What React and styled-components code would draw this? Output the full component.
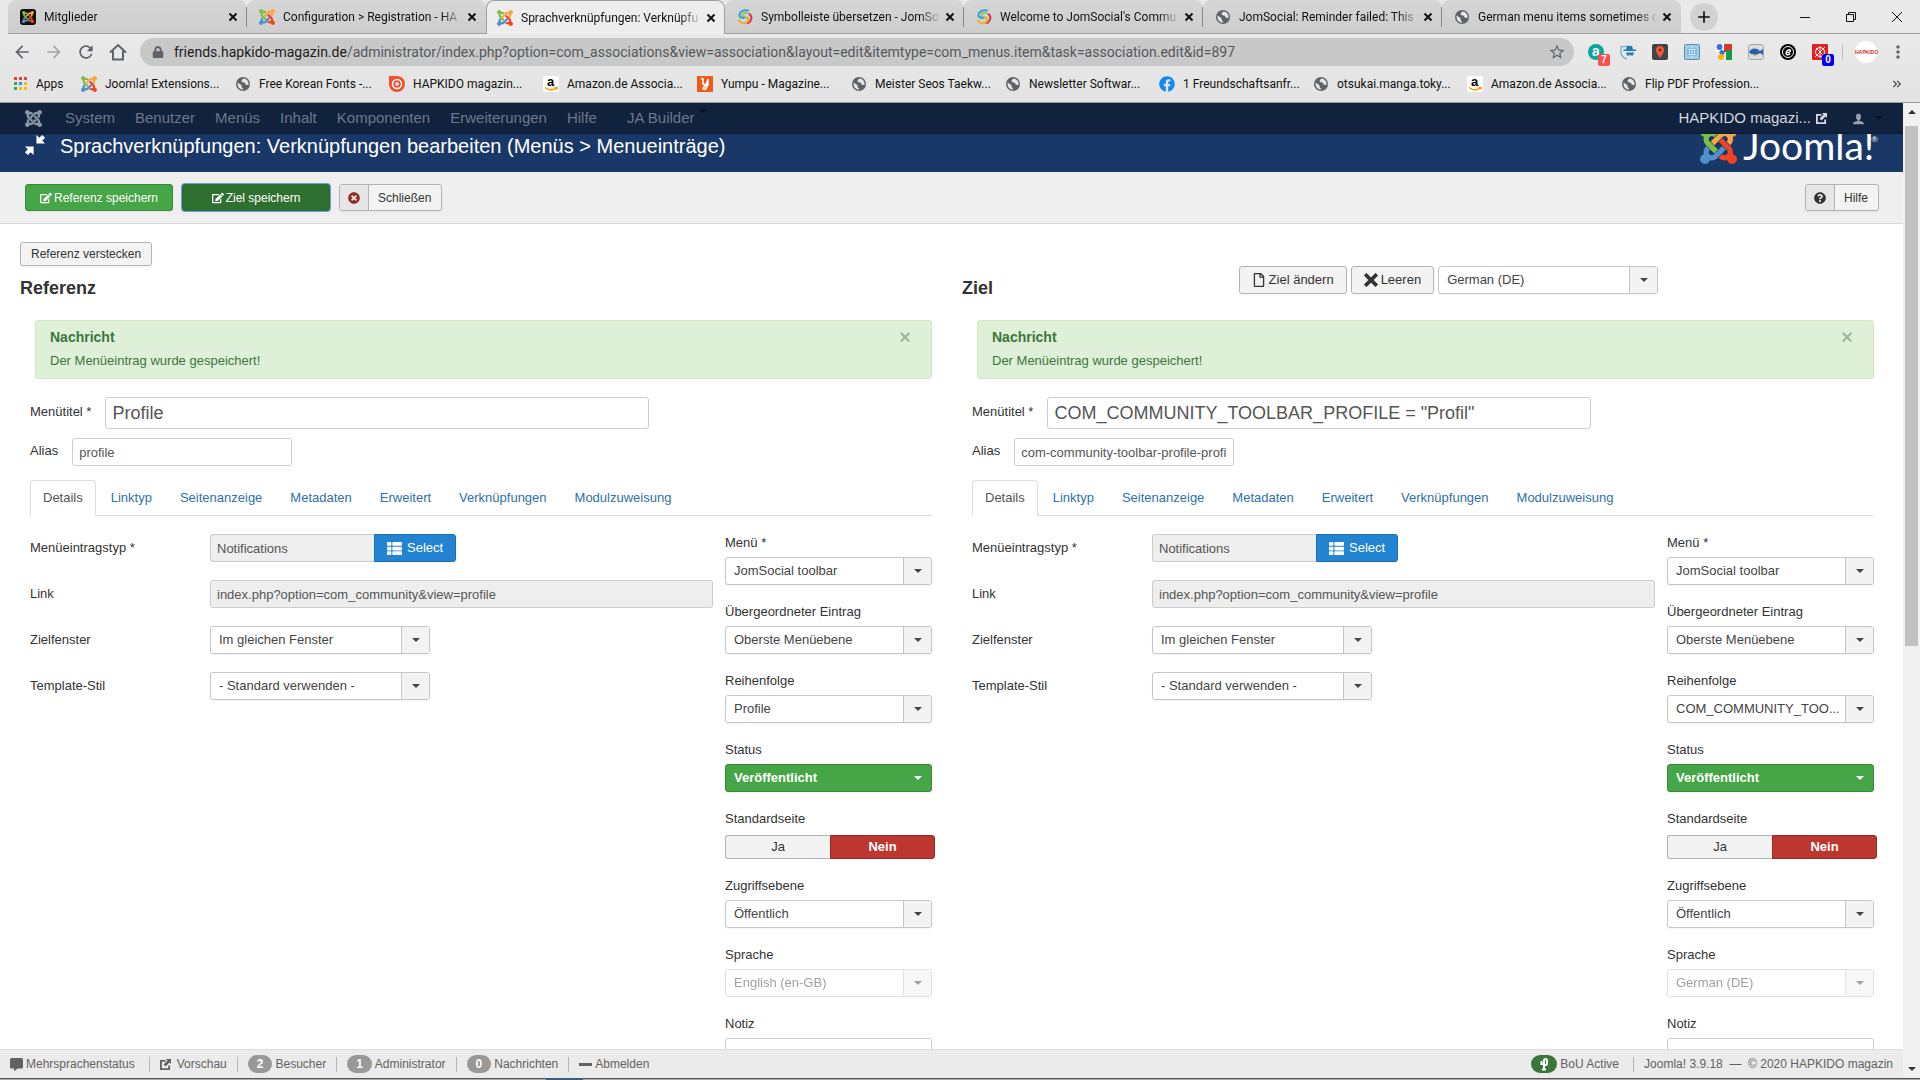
import React, { useId } from 'react';
import styled, { createGlobalStyle, css } from 'styled-components';
import {
  FaEdit,
  FaTimesCircle,
  FaQuestionCircle,
  FaRegFile,
  FaThList,
  FaCommentAlt,
  FaFacebook,
  FaLock,
} from 'react-icons/fa';
import { ImCross, ImUser } from 'react-icons/im';
import {
  MdArrowBack,
  MdArrowForward,
  MdRefresh,
  MdStarBorder,
  MdMoreVert,
  MdAdd,
  MdKeyboardDoubleArrowRight,
} from 'react-icons/md';

const GlobalStyle = createGlobalStyle`
  *, *::before, *::after {
    box-sizing: border-box;
  }

  body {
    margin: 0;
    background: #fff;
    color: #333;
    font: 13px/18px "Liberation Sans", Arial, sans-serif;
    overflow: hidden;
  }

  button, input, select {
    font: inherit;
    color: inherit;
    margin: 0;
  }

  a {
    color: inherit;
    text-decoration: none;
  }

  svg {
    flex: none;
    display: block;
  }
`;

/* ---------- browser frame ---------- */

const Window = styled.div`
  display: flex;
  flex-direction: column;
  height: 100vh;
`;

const Chrome = styled.header`
  flex: none;
  background: linear-gradient(#ededed, #e3e3e3);
  border-bottom: 1px solid #9a9a9a;
  color: #111;
  font: 12px/16px Roboto, "Open Sans", sans-serif;
`;

const TabStrip = styled.div`
  display: flex;
  height: 34px;
  padding-left: 8px;
  background: #e9e9e9;
`;

const BrowserTab = styled.div`
  display: flex;
  align-items: center;
  flex: 0 1 239px;
  min-width: 0;
  gap: 8px;
  padding: 0 9px 0 12px;
  border-radius: 8px 8px 0 0;
  background: linear-gradient(#d6d6d6, #cdcdcd);
  border-bottom: 1px solid #a0a0a0;

  button {
    margin-left: -4px;
  }

  ${(props) =>
    props.$active &&
    css`
      background: #ededed;
      border: 1px solid #a0a0a0;
      border-bottom: 0;
      padding: 0 8px 0 10px;
    `}
`;

const TabTitle = styled.span`
  flex: 1;
  overflow: hidden;
  white-space: nowrap;
  mask-image: linear-gradient(to right, #000 88%, transparent);
`;

const TabDivider = styled.span`
  flex: none;
  width: 1px;
  height: 20px;
  margin: 7px 0 7px -1px;
  background: #888;
`;

const StripRest = styled.div`
  flex: 1;
  display: flex;
  align-items: center;
  padding-left: 9px;
  border-bottom: 1px solid #a0a0a0;
`;

const PlainButton = styled.button`
  display: flex;
  align-items: center;
  justify-content: center;
  padding: 0;
  border: 0;
  background: none;
`;

const NewTab = styled(PlainButton)`
  width: 28px;
  height: 28px;
  border-radius: 50%;
  background: #d2d2d2;
`;

const WindowButtons = styled.div`
  display: flex;
  margin-left: auto;

  button {
    width: 46px;
    height: 28px;
  }
`;

const AddressRow = styled.div`
  display: flex;
  align-items: center;
  height: 36px;
  padding: 0 12px;
  color: #5f6368;
`;

const NavButtons = styled.div`
  display: flex;
  gap: 12px;
  margin-right: 12px;
`;

const AddressBar = styled.div`
  display: flex;
  align-items: center;
  flex: 1;
  height: 28px;
  padding: 0 8px 0 12px;
  gap: 10px;
  border-radius: 14px;
  background: #c8c8c8;
`;

const Address = styled.span`
  flex: 1;
  font-size: 14px;
  white-space: nowrap;
  color: #55585c;

  b {
    font-weight: 400;
    color: #1c1c1c;
  }
`;

const Extensions = styled.div`
  display: flex;
  align-items: center;
  gap: 16px;
  margin-left: 14px;
`;

const Extension = styled.span`
  position: relative;
  display: block;
`;

const ExtensionBadge = styled.span`
  position: absolute;
  right: -6px;
  bottom: -6px;
  width: 12px;
  border-radius: 2px;
  background: ${(props) => props.$color};
  color: #fff;
  font: bold 10px/12px "Liberation Sans", Arial, sans-serif;
  text-align: center;
`;

const ToolbarLine = styled.span`
  width: 1px;
  height: 16px;
  margin: 0 -4px 0 -2px;
  background: #bdbdbd;
`;

const Avatar = styled.span`
  width: 22px;
  height: 22px;
  margin-right: -5px;
  border-radius: 50%;
  background: #fff;
  color: #c33;
  font: bold 5px/22px "Liberation Sans", Arial, sans-serif;
  text-align: center;
`;

const BookmarkBar = styled.nav`
  display: flex;
  align-items: center;
  height: 32px;
  padding: 0 16px 4px 14px;
`;

const Bookmark = styled.a`
  display: flex;
  align-items: center;
  gap: 8px;
  flex: 0 1 ${(props) => props.$width || 154}px;
  white-space: nowrap;
`;

const MoreBookmarks = styled(PlainButton)`
  margin-left: auto;
  color: #444;
`;

const Viewport = styled.div`
  display: flex;
  flex: 1;
  min-height: 0;
`;

const Page = styled.div`
  display: flex;
  flex-direction: column;
  flex: 1;
  min-width: 0;
`;

const Scrollbar = styled.div`
  display: flex;
  flex-direction: column;
  align-items: center;
  justify-content: space-between;
  width: 17px;
  background: #f1f1f1;
  padding: 7px 0;
`;

const ScrollTrack = styled.div`
  flex: 1;
  width: 13px;
  margin: 12px 0;
`;

const ScrollThumb = styled.div`
  height: 56%;
  background: #c1c1c1;
`;

const Arrow = styled.span`
  flex: none;
  width: 0;
  height: 0;
  border: 4px solid transparent;
  border-${(props) => (props.$up ? 'bottom' : 'top')}-color: ${(props) => props.$color || '#333'};
  border-${(props) => (props.$up ? 'top' : 'bottom')}-width: 0;
`;

const TaskbarEdge = styled.div`
  flex: none;
  height: 2px;
  padding-left: 546px;
  border-top: 1px solid #555;
  background: #aaa;

  &::before {
    content: '';
    display: block;
    width: 37px;
    height: 1px;
    background: #1d63b0;
  }
`;

/* ---------- administrator header ---------- */

const Navbar = styled.nav`
  display: flex;
  align-items: center;
  flex: none;
  height: 31px;
  padding: 0 20px 0 25px;
  background: #10223e;
  border-bottom: 1px solid #0b182d;
  color: #6c788a;
  font-size: 15px;
`;

const NavMenu = styled.div`
  display: flex;
  gap: 20px;
  margin-left: 23px;

  a:last-of-type {
    margin-left: 10px;
  }

  span {
    margin-left: -16px;
  }
`;

const NavRight = styled.div`
  display: flex;
  align-items: center;
  margin-left: auto;
  gap: 10px;
  color: #97a0ad;
`;

const SiteLink = styled.a`
  display: flex;
  align-items: center;
  gap: 5px;
  margin-right: 15px;
  color: #d5d8dc;
`;

const TitleBar = styled.div`
  display: flex;
  align-items: flex-start;
  justify-content: space-between;
  flex: none;
  height: 38px;
  padding: 0 25px;
  overflow: hidden;
  background: #1a3867;
  color: #fff;
`;

const PageTitle = styled.h1`
  display: flex;
  gap: 14px;
  margin: 0;
  font-size: 20px;
  font-weight: 400;
  line-height: 24px;
`;

const Brand = styled.div`
  display: flex;
  gap: 6px;
  margin-top: -7px;
  font: 39px/36px Lato, sans-serif;

  sup {
    align-self: flex-start;
    margin: 2px 0 0 -9px;
    font-size: 8px;
    line-height: 20px;
  }
`;

const Subhead = styled.div`
  display: flex;
  flex: none;
  gap: 9px;
  padding: 12px 24px 12px 25px;
  background: #efefef;
  border-bottom: 1px solid #d9d9d9;
  font-size: 12px;

  > :last-child {
    margin-left: auto;
  }
`;

const Button = styled.button`
  display: inline-flex;
  align-items: center;
  justify-content: center;
  gap: 3px;
  height: ${(props) => props.$height || 28}px;
  padding: 0 12px;
  border: 1px solid #b3b3b3;
  border-radius: 3px;
  background: #f3f3f3;
  color: #333;
  box-shadow: 0 1px 2px rgba(0, 0, 0, 0.05);
  white-space: nowrap;
`;

const SaveButton = styled(Button)`
  width: 148px;
  gap: 2px;
  background: #46a546;
  border-color: #3a8a3a;
  color: #fff;

  ${(props) =>
    props.$focused &&
    css`
      background: #2f6f2f;
      border-color: #2f6f2f;
      box-shadow: 0 0 0 1px #6a9fe8;
    `}
`;

const IconButton = styled(Button)`
  padding: 0 10px 0 0;
  gap: 9px;
`;

const IconCell = styled.span`
  display: flex;
  align-items: center;
  justify-content: center;
  align-self: stretch;
  width: 29px;
  border-right: 1px solid #b3b3b3;
  border-radius: 2px 0 0 2px;
  background: #e6e6e6;
  color: ${(props) => props.$color || '#333'};
`;

/* ---------- association panes ---------- */

const Content = styled.main`
  flex: 1;
  min-height: 0;
  overflow: hidden;
  padding: 18px 19px 0 20px;
`;

const SmallButton = styled(Button)`
  display: flex;
  padding: 0 10px;
  font-size: 12px;
`;

const Panes = styled.div`
  display: grid;
  grid-template-columns: 1fr 1fr;
  gap: 20px;
`;

const PaneHead = styled.div`
  display: grid;
  grid-template-columns: 30% 1fr;
  align-items: start;
  height: 54px;
`;

const PaneTitle = styled.h3`
  margin: 10px 0 0;
  font-size: 18px;
  line-height: 24px;
`;

const PaneTools = styled.div`
  display: flex;
  gap: 4px;
`;

const PaneBody = styled.div`
  padding: 0 10px;
`;

const Alert = styled.div`
  display: flex;
  justify-content: space-between;
  align-items: flex-start;
  margin: 0 0 18px 5px;
  padding: 7px 20px 8px 14px;
  border: 1px solid #cfe8bd;
  border-radius: 3px;
  background: #dff0d8;
  color: #3c763d;

  h4 {
    margin: 0 0 6px;
    font-size: 14px;
    line-height: 18px;
  }

  p {
    margin: 0;
  }

  button {
    font-size: 20px;
    font-weight: bold;
    line-height: 18px;
    color: #000;
    opacity: 0.25;
  }
`;

const InlineField = styled.div`
  display: flex;
  align-items: center;
  gap: 14px;
  margin-bottom: ${(props) => props.$gap}px;

  label {
    padding-bottom: 2px;
  }
`;

const TextInput = styled.input`
  min-width: 0;
  height: ${(props) => (props.$large ? 32 : 28)}px;
  width: ${(props) => props.$width || '100%'};
  padding: 4px 6px;
  border: 1px solid #ccc;
  border-radius: 3px;
  background: #fff;
  color: #555;
  font-size: ${(props) => (props.$large ? 18 : 13)}px;

  &:read-only {
    background: #eee;
  }
`;

const Tabs = styled.ul`
  display: flex;
  gap: 2px;
  margin: 0 0 18px;
  padding: 0;
  list-style: none;
  border-bottom: 1px solid #ddd;
`;

const Tab = styled.li`
  margin-bottom: -1px;
  padding: 8px 12px;
  border: 1px solid transparent;
  border-radius: 4px 4px 0 0;
  color: #3071a9;

  ${(props) =>
    props.$active &&
    css`
      border-color: #ddd #ddd #fff;
      background: #fff;
      color: #555;
    `}
`;

const FormColumns = styled.div`
  display: grid;
  grid-template-columns: 1fr 207px;
  gap: 12px;
  align-items: start;
`;

const FieldList = styled.div`
  display: grid;
  grid-template-columns: 180px 1fr;
  row-gap: 18px;
  align-items: center;
`;

const InputGroup = styled.div`
  display: flex;

  input {
    border-radius: 3px 0 0 3px;
    border-right: 0;
  }
`;

const PrimaryButton = styled(Button)`
  gap: 5px;
  border-color: #1a6fb3;
  border-radius: 0 3px 3px 0;
  background: #2384d3;
  color: #fff;
`;

const SideFields = styled.div`
  display: flex;
  flex-direction: column;
  gap: 18px;
`;

const SideField = styled.div`
  display: flex;
  flex-direction: column;
  gap: 5px;
`;

const SelectFrame = styled.div`
  display: flex;
  width: ${(props) => props.$width || '100%'};
  height: 28px;
  border: 1px solid #c6c6c6;
  border-radius: 3px;
  background: #fff;
  color: #444;
  box-shadow: 0 1px 2px rgba(0, 0, 0, 0.05);

  select {
    flex: 1;
    min-width: 0;
    padding: 0 0 0 8px;
    border: 0;
    background: none;
    appearance: none;
    opacity: 1;
  }

  ${(props) =>
    props.$disabled &&
    css`
      opacity: 0.5;
    `}

  ${(props) =>
    props.$published &&
    css`
      border-color: #3a8a3a;
      background: #46a546;
      color: #fff;
      font-weight: bold;
    `}
`;

const CaretBox = styled.span`
  display: flex;
  align-items: center;
  justify-content: center;
  width: 28px;
  border-left: 1px solid ${(props) => (props.$published ? 'transparent' : '#c6c6c6')};
  border-radius: 0 2px 2px 0;
  background: ${(props) => (props.$published ? 'none' : '#f3f3f3')};
`;

const RadioGroup = styled.div`
  display: flex;
  padding-top: 2px;

  input {
    position: absolute;
    opacity: 0;
  }
`;

const RadioLabel = styled.label`
  flex: none;
  width: 105px;
  height: 24px;
  border: 1px solid #b3b3b3;
  border-right: 0;
  border-radius: 3px 0 0 3px;
  background: #f3f3f3;
  line-height: 22px;
  text-align: center;

  ${(props) =>
    props.$active &&
    css`
      border: 1px solid #942a25;
      border-radius: 0 3px 3px 0;
      background: #bd362f;
      color: #fff;
      font-weight: bold;
    `}
`;

/* ---------- status bar ---------- */

const StatusBar = styled.footer`
  display: flex;
  align-items: center;
  flex: none;
  height: 29px;
  padding: 0 10px;
  border-top: 1px solid #dcdcdc;
  background: #ebebeb;
  color: #626262;
  font-size: 12px;
`;

const StatusItem = styled.a`
  display: flex;
  align-items: center;
  gap: ${(props) => (props.$wide ? 6 : 3)}px;
  padding-right: ${(props) => (props.$last ? 0 : 10)}px;

  & + & {
    padding-left: ${(props) => (props.$wide ? 15 : 10)}px;
    border-left: 1px solid #b5b5b5;
    line-height: 15px;
  }

  &:first-child {
    padding-right: 14px;
  }
`;

const StatusRight = styled.div`
  display: flex;
  align-items: center;
  margin-left: auto;
  white-space: pre;
`;

const Badge = styled.span`
  padding: 0 9px;
  margin: -2px 0;
  border-radius: 9px;
  background: ${(props) => props.$color || '#999'};
  color: #fff;
  font-weight: bold;
  line-height: 18px;
`;

/* ---------- drawings ---------- */

const JoomlaMark = ({ size, colors = ['#7ac143', '#f9a541', '#f44321', '#5091cd'] }) => (
  <svg width={size} height={size} viewBox="0 32 448 448" aria-hidden="true">
    <path fill={colors[0]} d="M.6 92.1C.6 58.8 27.4 32 60.4 32c30 0 54.5 21.9 59.2 50.2 32.6-7.6 67.1.6 96.5 30l-44.3 44.3c-20.5-20.5-42.6-16.3-55.4-3.5-14.3 14.3-14.3 37.9 0 52.2l99.5 99.5-44 44.3c-87.7-87.2-49.7-49.7-99.8-99.7-26.8-26.5-35-64.8-24.8-98.9C20.4 144.6.6 120.7.6 92.1z" />
    <path fill={colors[1]} d="M130.1 208.5l44.3 44.3c10-10 89.7-89.7 99.7-99.8 14.3-14.3 37.6-14.3 51.9 0 12.8 12.8 17 35-3.5 55.4l44 44.3c31.2-31.2 38.5-67.6 28.9-101.2 29.2-4.1 51.9-29.2 51.9-59.5 0-33.2-26.8-60.1-59.8-60.1-30.3 0-55.4 22.5-59.5 51.6-33.8-9.9-71.7-1.5-98.3 25.1-18.3 19.1-71.1 71.5-99.6 99.9z" />
    <path fill={colors[2]} d="M396.4 360.7c8.2-32.7-.9-68.5-26.3-93.9-11.8-12.2 5 4.7-99.5-99.7l-44.3 44.3 99.7 99.7c14.3 14.3 14.3 37.6 0 51.9-12.8 12.8-35 17-55.4-3.5l-44 44.3c27.6 30.2 68 38.8 102.7 28 5.5 27.4 29.7 48.1 58.9 48.1 33 0 59.8-26.8 59.8-60.1 0-30.2-22.5-55-51.6-59.1z" />
    <path fill={colors[3]} d="M312.1 307.6l-44-44.3c-87 86.4-50.4 50.4-99.7 99.8-14.3 14.3-37.6 14.3-51.9 0-13.1-13.4-16.9-35.3 3.2-55.4l-44-44.3c-30.2 30.2-38 65.2-29.5 98.3-26.7 6-46.2 29.9-46.2 58.2C0 453.2 26.8 480 59.8 480c28.6 0 52.5-19.8 58.6-46.7 32.7 8.2 68.5-.6 94.2-26 32.1-32 12.2-12.4 99.5-99.7z" />
  </svg>
);

const JoomlaDark = () => (
  <svg width="16" height="16" viewBox="0 0 16 16" aria-hidden="true">
    <rect width="16" height="16" rx="3" fill="#111" />
    <svg x="2" y="2" width="12" height="12">
      <JoomlaMark size={12} />
    </svg>
  </svg>
);

const Globe = () => (
  <svg width="16" height="16" viewBox="0 0 16 16" aria-hidden="true">
    <circle cx="8" cy="8" r="7" fill="#5f6368" />
    <path d="M2.6 6.4L6.3 9l.5 2.2 1.7 2.3c-3.6.3-6.3-2.6-5.9-7.1z" fill="#e6e6e6" />
    <path d="M8.3 2.5L6.5 4.4l.6 1.7 2.7.7 1 1.9 2.7.3c.6-3.4-1.8-6.3-5.2-6.5z" fill="#e6e6e6" />
  </svg>
);

const Swirl = () => (
  <svg width="16" height="16" viewBox="0 0 16 16" fill="none" strokeLinecap="round" aria-hidden="true">
    <path d="M11 1.5C6 .5 2 3 2.5 6.5c.4 2 2.5 2.5 4.5 2.5" stroke="#2aa5dc" strokeWidth="2" />
    <path d="M10.5 4C7 3.5 5 4.5 5.5 6.5 6 8 9 7.5 10 9" stroke="#8cc63f" strokeWidth="1.6" />
    <path d="M12.5 5c3 2.5 2.5 7-1.5 9" stroke="#d8334a" strokeWidth="2" />
    <path d="M2 11.5c2 3.5 7 4 9 .5.8-1.6 0-3-1-3.5" stroke="#f7a823" strokeWidth="2" />
  </svg>
);

const AppsGrid = () => (
  <svg width="14" height="14" viewBox="0 0 14 14" aria-hidden="true">
    {['#ea4335', '#ea4335', '#ea4335', '#34a853', '#4285f4', '#fbbc05', '#34a853', '#fbbc05', '#fbbc05'].map((fill, i) => (
      <rect key={i} x={(i % 3) * 5} y={Math.floor(i / 3) * 5} width="3" height="3" fill={fill} />
    ))}
  </svg>
);

const Target = () => (
  <svg width="16" height="16" viewBox="0 0 16 16" aria-hidden="true">
    <path d="M0 0h8a8 8 0 1 1-8 8z" fill="#f0502a" />
    <circle cx="8" cy="8" r="4.5" fill="none" stroke="#fff" strokeWidth="1.5" />
    <circle cx="8" cy="8" r="1.8" fill="#fff" />
  </svg>
);

const AmazonTile = () => (
  <svg width="16" height="16" viewBox="0 0 16 16" aria-hidden="true">
    <rect width="16" height="16" rx="2" fill="#fff" />
    <text x="4" y="10" fontFamily="Liberation Sans" fontWeight="bold" fontSize="13">a</text>
    <path d="M2 11.5c4 3 8 3 11.5.5M11.5 11.5h2.5v2" fill="none" stroke="#f90" strokeWidth="1.5" />
  </svg>
);

const YumpuTile = () => (
  <svg width="16" height="16" viewBox="0 0 16 16" aria-hidden="true">
    <rect width="16" height="16" fill="#ee5a1c" />
    <path d="M4 3c2-1 2.5 0 2 2.5S6 9 8 8.5 10.5 5 11 3M11 3c0 4-.5 8-2.5 10-1.5 1-3 0-2-1.5S10 9 12 8" fill="none" stroke="#fff" strokeWidth="1.6" />
  </svg>
);

const Compress = () => (
  <svg width="21" height="21" viewBox="0 -1 22 22" fill="#fff" aria-hidden="true">
    <path d="M12 0v9h9l-3-3 3-3-3-3-3 3zM0 12h9v9l-3-3-3 3-3-3 3-3z" />
  </svg>
);

const HomeIcon = () => (
  <svg width="20" height="20" viewBox="0 0 20 20" fill="none" stroke="#5f6368" strokeWidth="2" aria-hidden="true">
    <path d="M2 10.5L10 3l8 7.5M5 9v8.5h10V9" />
  </svg>
);

const CloseIcon = () => (
  <svg width="10" height="10" viewBox="0 0 10 10" stroke="#111" strokeWidth="2" aria-hidden="true">
    <path d="M1.5 1.5l7 7M8.5 1.5l-7 7" />
  </svg>
);

const ExternalIcon = () => (
  <svg width="11" height="11" viewBox="0 0 12 12" aria-hidden="true">
    <path d="M6 2H1v9h9V7" fill="none" stroke="currentColor" strokeWidth="2" />
    <path d="M6.500 0H12v5.500l-1.700-1.700L6 8.100 3.900 6l4.300-4.300z" fill="currentColor" />
  </svg>
);

const extensionIcons = [
  {
    key: 'letter',
    badge: '7',
    color: '#f9504f',
    art: (
      <>
        <circle cx="8" cy="8" r="8" fill="#0aa699" />
        <text x="4" y="12" fill="#fff" fontFamily="Liberation Sans" fontWeight="bold" fontSize="14">a</text>
      </>
    ),
  },
  {
    key: 'spy',
    art: (
      <>
        <path d="M8 1.5C6 3 4 3 1 2.5V8c0 4 3 6 6 7" fill="none" stroke="#7db6d8" strokeWidth="1.5" />
        <path d="M6 5.5l1-3.5h5l1 3.5h3V7H3.5V5.5zM6 8.5h8l-1 3h-2.5L10 10l-.5 1.5H7z" fill="#2378b5" />
      </>
    ),
  },
  {
    key: 'pin',
    art: (
      <>
        <rect width="16" height="16" rx="2" fill="#404347" />
        <path d="M8 14C5 9.5 4 8 4 6a4 4 0 0 1 8 0c0 2-1 3.5-4 8z" fill="#f05a35" />
        <circle cx="8" cy="6" r="1.5" fill="#7a2618" />
      </>
    ),
  },
  {
    key: 'atlas',
    art: (
      <>
        <rect x=".5" y=".5" width="15" height="15" rx="1" fill="#a5cce6" stroke="#5a8fb5" />
        <circle cx="8" cy="8" r="5" fill="#5a9fd0" />
        <path d="M3 8h10M8 3v10M4 5.5h8M4 10.5h8" fill="none" stroke="#e6f4fc" strokeWidth=".8" />
        <ellipse cx="8" cy="8" rx="2.5" ry="5" fill="none" stroke="#e6f4fc" strokeWidth=".8" />
      </>
    ),
  },
  {
    key: 'tiles',
    art: (
      <>
        <path d="M0 0h8v8H0z" fill="#fff" />
        <path d="M8 0h8v8H8z" fill="#e0352b" />
        <path d="M10 6h6v10h-6z" fill="#159a48" />
        <circle cx="3.5" cy="3" r="3" fill="#3b6fd9" />
        <circle cx="6" cy="8.5" r="2.5" fill="#3b6fd9" />
        <circle cx="5" cy="13" r="3" fill="#f5b800" />
      </>
    ),
  },
  {
    key: 'fish',
    art: (
      <>
        <rect x=".5" y=".5" width="15" height="15" rx="2" fill="#ddd" stroke="#a8a8a8" />
        <path d="M1 8c2-4 7-5 11-1l3-2v6l-3-2c-4 3-8 3-11-1z" fill="#2a5fb0" />
        <path d="M4 10c2 1.5 5 1.5 7 0" stroke="#e4c63a" fill="none" />
      </>
    ),
  },
  {
    key: 'round-e',
    art: (
      <>
        <circle cx="8" cy="8" r="8" fill="#000" />
        <circle cx="8" cy="8" r="5.5" fill="none" stroke="#fff" strokeWidth="1" />
        <path d="M5.8 8.7c3 0 5-1 4.5-2.5C9.5 4.8 6 6.5 6 9.5c.2 2 3 1.5 4.2 0" fill="none" stroke="#fff" strokeWidth="1.4" />
      </>
    ),
  },
  {
    key: 'aim',
    badge: '0',
    color: '#0000f5',
    art: (
      <>
        <rect width="16" height="16" rx="1" fill="#dd2222" />
        <circle cx="8" cy="8" r="4.5" fill="none" stroke="#fff" />
        <path d="M3 13L13 3M4 4l8 8M8 2v12" stroke="#fff" strokeWidth=".8" />
      </>
    ),
  },
];

/* ---------- data ---------- */

const browserTabs = [
  { title: 'Mitglieder', icon: <JoomlaDark /> },
  { title: 'Configuration > Registration - HA', icon: <JoomlaMark size={16} />, divider: true },
  { title: 'Sprachverknüpfungen: Verknüpfu', icon: <JoomlaMark size={16} />, active: true },
  { title: 'Symbolleiste übersetzen - JomSo', icon: <Swirl /> },
  { title: "Welcome to JomSocial's Commu", icon: <Swirl />, divider: true },
  { title: 'JomSocial: Reminder failed: This u', icon: <Globe />, divider: true },
  { title: 'German menu items sometimes c', icon: <Globe />, divider: true },
];

const bookmarks = [
  { title: 'Joomla! Extensions...', icon: <JoomlaMark size={16} /> },
  { title: 'Free Korean Fonts -...', icon: <Globe /> },
  { title: 'HAPKIDO magazin...', icon: <Target /> },
  { title: 'Amazon.de Associa...', icon: <AmazonTile /> },
  { title: 'Yumpu - Magazine...', icon: <YumpuTile /> },
  { title: 'Meister Seos Taekw...', icon: <Globe /> },
  { title: 'Newsletter Softwar...', icon: <Globe /> },
  { title: '1 Freundschaftsanfr...', icon: <FaFacebook size={16} color="#1389f5" /> },
  { title: 'otsukai.manga.toky...', icon: <Globe /> },
  { title: 'Amazon.de Associa...', icon: <AmazonTile /> },
  { title: 'Flip PDF Profession...', icon: <Globe /> },
];

const navItems = ['System', 'Benutzer', 'Menüs', 'Inhalt', 'Komponenten', 'Erweiterungen', 'Hilfe', 'JA Builder'];

const formTabs = ['Details', 'Linktyp', 'Seitenanzeige', 'Metadaten', 'Erweitert', 'Verknüpfungen', 'Modulzuweisung'];

/* ---------- components ---------- */

const Select = ({ id, label, value, width, disabled, published }) => (
  <SelectFrame $width={width} $disabled={disabled} $published={published}>
    <select id={id} aria-label={label} disabled={disabled}>
      <option>{value}</option>
    </select>
    <CaretBox $published={published}>
      <Arrow $color={published ? '#fff' : '#444'} />
    </CaretBox>
  </SelectFrame>
);

const SideSelect = ({ label, ...rest }) => {
  const id = useId();
  return (
    <SideField>
      <label htmlFor={id}>{label}</label>
      <Select id={id} {...rest} />
    </SideField>
  );
};

const MenuItemForm = ({ title, alias, order, language }) => {
  const id = useId();
  return (
    <PaneBody>
      <Alert>
        <div>
          <h4>Nachricht</h4>
          <p>Der Menüeintrag wurde gespeichert!</p>
        </div>
        <PlainButton type="button">×</PlainButton>
      </Alert>

      <InlineField $gap={9}>
        <label htmlFor={`${id}title`}>Menütitel *</label>
        <TextInput id={`${id}title`} $large $width="544px" defaultValue={title} />
      </InlineField>
      <InlineField $gap={14}>
        <label htmlFor={`${id}alias`}>Alias</label>
        <TextInput id={`${id}alias`} $width="220px" defaultValue={alias} />
      </InlineField>

      <Tabs>
        {formTabs.map((tab, i) => (
          <Tab key={tab} $active={i === 0}>
            <a href="#tab">{tab}</a>
          </Tab>
        ))}
      </Tabs>

      <FormColumns>
        <FieldList>
          <label htmlFor={`${id}type`}>Menüeintragstyp *</label>
          <InputGroup>
            <TextInput id={`${id}type`} $width="164px" readOnly value="Notifications" />
            <PrimaryButton type="button">
              <FaThList size={15} /> Select
            </PrimaryButton>
          </InputGroup>
          <label htmlFor={`${id}link`}>Link</label>
          <TextInput id={`${id}link`} readOnly value="index.php?option=com_community&view=profile" />
          <label htmlFor={`${id}window`}>Zielfenster</label>
          <Select id={`${id}window`} width="220px" value="Im gleichen Fenster" />
          <label htmlFor={`${id}style`}>Template-Stil</label>
          <Select id={`${id}style`} width="220px" value="- Standard verwenden -" />
        </FieldList>

        <SideFields>
          <SideSelect label="Menü *" value="JomSocial toolbar" />
          <SideSelect label="Übergeordneter Eintrag" value="Oberste Menüebene" />
          <SideSelect label="Reihenfolge" value={order} />
          <SideSelect label="Status" value="Veröffentlicht" published />
          <SideField>
            <span>Standardseite</span>
            <RadioGroup role="radiogroup" aria-label="Standardseite">
              <RadioLabel>
                <input type="radio" name={`${id}home`} />
                Ja
              </RadioLabel>
              <RadioLabel $active>
                <input type="radio" name={`${id}home`} defaultChecked />
                Nein
              </RadioLabel>
            </RadioGroup>
          </SideField>
          <SideSelect label="Zugriffsebene" value="Öffentlich" />
          <SideSelect label="Sprache" value={language} disabled />
          <SideField>
            <label htmlFor={`${id}note`}>Notiz</label>
            <TextInput id={`${id}note`} />
          </SideField>
        </SideFields>
      </FormColumns>
    </PaneBody>
  );
};

const BrowserChrome = () => (
  <Chrome>
    <TabStrip>
      {browserTabs.map((tab) => (
        <React.Fragment key={tab.title}>
          {tab.divider && <TabDivider />}
          <BrowserTab $active={tab.active}>
            {tab.icon}
            <TabTitle>{tab.title}</TabTitle>
            <PlainButton type="button" aria-label="Close">
              <CloseIcon />
            </PlainButton>
          </BrowserTab>
        </React.Fragment>
      ))}
      <StripRest>
        <NewTab type="button" aria-label="New tab">
          <MdAdd size={20} />
        </NewTab>
        <WindowButtons>
          <PlainButton type="button" aria-label="Minimize">
            <svg width="10" height="10" stroke="#111"><path d="M0 5.5h10" /></svg>
          </PlainButton>
          <PlainButton type="button" aria-label="Restore">
            <svg width="10" height="10" fill="none" stroke="#111"><path d="M.5 2.5h7v7h-7zM2.5 2.5v-2h7v7h-2" /></svg>
          </PlainButton>
          <PlainButton type="button" aria-label="Close window">
            <svg width="10" height="10" stroke="#111"><path d="M0 0l10 10M10 0L0 10" /></svg>
          </PlainButton>
        </WindowButtons>
      </StripRest>
    </TabStrip>

    <AddressRow>
      <NavButtons>
        <MdArrowBack size={20} />
        <MdArrowForward size={20} color="#a5a7a9" />
        <MdRefresh size={20} />
        <HomeIcon />
      </NavButtons>
      <AddressBar>
        <FaLock size={12} />
        <Address>
          <b>friends.hapkido-magazin.de</b>
          /administrator/index.php?option=com_associations&amp;view=association&amp;layout=edit&amp;itemtype=com_menus.item&amp;task=association.edit&amp;id=897
        </Address>
        <MdStarBorder size={18} />
      </AddressBar>
      <Extensions>
        {extensionIcons.map((ext) => (
          <Extension key={ext.key}>
            <svg width="16" height="16" viewBox="0 0 16 16">{ext.art}</svg>
            {ext.badge && <ExtensionBadge $color={ext.color}>{ext.badge}</ExtensionBadge>}
          </Extension>
        ))}
        <ToolbarLine />
        <Avatar>HAPKIDO</Avatar>
        <MdMoreVert size={20} />
      </Extensions>
    </AddressRow>

    <BookmarkBar>
      <Bookmark href="#apps" $width={67}>
        <AppsGrid />
        Apps
      </Bookmark>
      {bookmarks.map((mark, i) => (
        <Bookmark key={i} href="#bookmark">
          {mark.icon}
          {mark.title}
        </Bookmark>
      ))}
      <MoreBookmarks type="button" aria-label="More bookmarks">
        <MdKeyboardDoubleArrowRight size={14} />
      </MoreBookmarks>
    </BookmarkBar>
  </Chrome>
);

const App = () => (
  <Window>
    <GlobalStyle />
    <BrowserChrome />

    <Viewport>
      <Page>
        <Navbar>
          <JoomlaMark size={17} colors={['#8b94a1', '#8b94a1', '#8b94a1', '#8b94a1']} />
          <NavMenu>
            {navItems.map((item) => (
              <a key={item} href="#menu">{item}</a>
            ))}
            <Arrow $color="#08111f" />
          </NavMenu>
          <NavRight>
            <SiteLink href="#site">
              HAPKIDO magazi... <ExternalIcon />
            </SiteLink>
            <ImUser size={13} />
            <Arrow $color="#08111f" />
          </NavRight>
        </Navbar>

        <TitleBar>
          <PageTitle>
            <Compress />
            Sprachverknüpfungen: Verknüpfungen bearbeiten (Menüs &gt; Menueinträge)
          </PageTitle>
          <Brand>
            <JoomlaMark size={37} />
            Joomla!<sup>®</sup>
          </Brand>
        </TitleBar>

        <Subhead>
          <SaveButton type="button" $height={27}>
            <FaEdit size={12} />
            Referenz speichern
          </SaveButton>
          <SaveButton type="button" $height={27} $focused>
            <FaEdit size={12} />
            Ziel speichern
          </SaveButton>
          <IconButton type="button" $height={27}>
            <IconCell $color="#942a25"><FaTimesCircle size={12} /></IconCell>
            Schließen
          </IconButton>
          <IconButton type="button" $height={27}>
            <IconCell><FaQuestionCircle size={12} /></IconCell>
            Hilfe
          </IconButton>
        </Subhead>

        <Content>
          <SmallButton type="button" $height={24}>Referenz verstecken</SmallButton>
          <Panes>
            <section>
              <PaneHead>
                <PaneTitle>Referenz</PaneTitle>
              </PaneHead>
              <MenuItemForm title="Profile" alias="profile" order="Profile" language="English (en-GB)" />
            </section>
            <section>
              <PaneHead>
                <PaneTitle>Ziel</PaneTitle>
                <PaneTools>
                  <Button type="button"><FaRegFile size={14} />Ziel ändern</Button>
                  <Button type="button"><ImCross size={14} />Leeren</Button>
                  <Select label="Sprache" width="220px" value="German (DE)" />
                </PaneTools>
              </PaneHead>
              <MenuItemForm
                title={'COM_COMMUNITY_TOOLBAR_PROFILE = "Profil"'}
                alias="com-community-toolbar-profile-profi"
                order="COM_COMMUNITY_TOO..."
                language="German (DE)"
              />
            </section>
          </Panes>
        </Content>

        <StatusBar>
          <StatusItem href="#lang"><FaCommentAlt size={13} />Mehrsprachenstatus</StatusItem>
          <StatusItem href="#preview" $wide><ExternalIcon />Vorschau</StatusItem>
          <StatusItem href="#visitors"><Badge>2</Badge>Besucher</StatusItem>
          <StatusItem href="#admins"><Badge>1</Badge>Administrator</StatusItem>
          <StatusItem href="#messages"><Badge>0</Badge>Nachrichten</StatusItem>
          <StatusItem href="#logout">
            <svg width="13" height="3"><rect width="13" height="3" fill="#626262" /></svg>
            Abmelden
          </StatusItem>
          <StatusRight>
            <StatusItem href="#bou">
              <Badge $color="#3c763d">
                <svg width="8" height="18" viewBox="0 0 8 18" fill="none" stroke="#fff" strokeWidth="2">
                  <path d="M4 15V5.5c0-2 3-2 3 0v3c0 1-1 1.5-2 1.5M4 9H1.5V6M2 14.5h4" />
                </svg>
              </Badge>
              BoU Active
            </StatusItem>
            <StatusItem as="span" $last>Joomla! 3.9.18  —  © 2020 HAPKIDO magazin</StatusItem>
          </StatusRight>
        </StatusBar>
      </Page>

      <Scrollbar>
        <Arrow $up />
        <ScrollTrack>
          <ScrollThumb />
        </ScrollTrack>
        <Arrow />
      </Scrollbar>
    </Viewport>
    <TaskbarEdge />
  </Window>
);

export default App;
